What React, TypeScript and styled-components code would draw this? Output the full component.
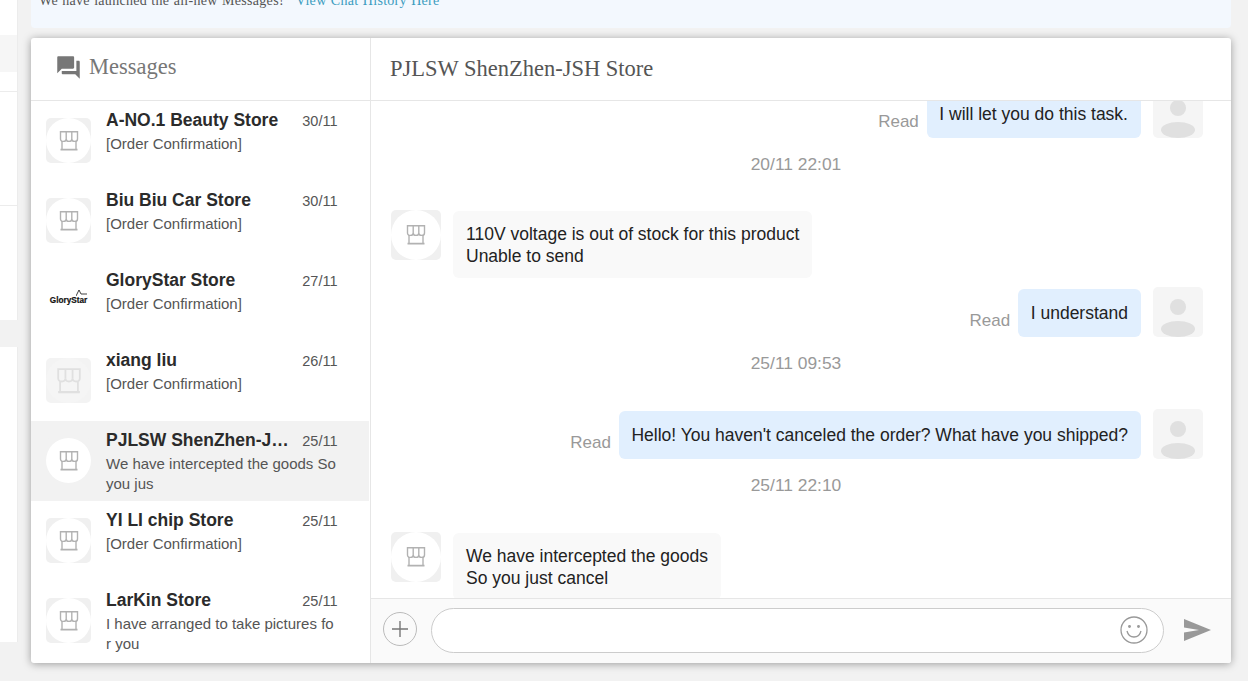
import React from 'react'
import styled, { createGlobalStyle } from 'styled-components'

const sans = '"Liberation Sans", Arial, sans-serif'
const serif = '"Liberation Serif", "Times New Roman", serif'

const GlobalStyle = createGlobalStyle`
  html, body {
    margin: 0;
    padding: 0;
    height: 100%;
    overflow: hidden;
    background: #f2f2f2;
    font-family: ${sans};
  }
  * { box-sizing: border-box; }
`

const Page = styled.div`
  display: flex;
  gap: 13px;
  height: 701px;
  margin-top: -20px;
  overflow: hidden;
`

const Rail = styled.aside`
  display: flex;
  flex-direction: column;
  flex: 0 0 18px;
`

const RailBlock = styled.div<{ $h: number; $kind: 'white' | 'band' | 'gap'; $line?: boolean }>`
  height: ${(p) => p.$h}px;
  background: ${(p) => (p.$kind === 'white' ? '#fff' : p.$kind === 'band' ? '#f6f6f6' : 'transparent')};
  border-right: ${(p) => (p.$kind === 'gap' ? 'none' : '1px solid #ececec')};
  border-bottom: ${(p) => (p.$line ? '1px solid #ececec' : 'none')};
`

const Main = styled.main`
  display: flex;
  flex-direction: column;
  flex: 0 0 1200px;
`

const Notice = styled.div`
  height: 48px;
  padding: 11px 8px 0;
  background: #f3f8fe;
  border-radius: 0 0 4px 4px;
  font-family: ${serif};
  font-size: 14px;
  line-height: 20px;
  color: #555;
  letter-spacing: 0.3px;
  word-spacing: 0.5px;
`

const NoticeLink = styled.a`
  margin-left: 12px;
  color: #3b9cc0;
`

const Card = styled.section`
  display: flex;
  height: 625px;
  margin-top: 10px;
  background: #fff;
  border-radius: 3px;
  box-shadow: 0 1px 8px rgba(0, 0, 0, 0.36);
  overflow: hidden;
`

const Sidebar = styled.div`
  display: flex;
  flex-direction: column;
  flex: 0 0 340px;
  border-right: 1px solid #e6e6e6;
`

const SidebarHead = styled.header`
  display: flex;
  align-items: center;
  gap: 7px;
  height: 63px;
  padding: 0 0 4px 24px;
  border-bottom: 1px solid #e6e6e6;
  font-family: ${serif};
  font-size: 22.5px;
  color: #777;
`

const List = styled.div`
  flex: 1;
  overflow: hidden;
`

const Item = styled.div<{ $active?: boolean }>`
  display: flex;
  gap: 15px;
  height: 80px;
  width: 338px;
  padding: 8px 0 0 15px;
  background: ${(p) => (p.$active ? '#f2f2f2' : 'transparent')};
`

const Thumb = styled.div<{ $active?: boolean; $faded?: boolean; $plain?: boolean }>`
  display: flex;
  align-items: center;
  justify-content: center;
  flex: 0 0 45px;
  width: 45px;
  height: 45px;
  margin-top: 9px;
  border-radius: 5px;
  background: ${(p) => (p.$plain ? 'transparent' : p.$active ? '#f2f2f2' : p.$faded ? '#f3f3f3' : '#f0f0f0')};
  overflow: hidden;
`

const ThumbCircle = styled.div<{ $faded?: boolean }>`
  display: flex;
  align-items: center;
  justify-content: center;
  width: 45px;
  height: 45px;
  border-radius: 50%;
  background: ${(p) => (p.$faded ? '#f5f5f5' : '#fff')};
`

const ItemBody = styled.div`
  flex: 1;
  min-width: 0;
  padding-right: 31.5px;
`

const ItemTop = styled.div`
  display: flex;
  align-items: flex-start;
  gap: 12px;
  height: 24px;
`

const ItemName = styled.div`
  flex: 1;
  min-width: 0;
  white-space: nowrap;
  overflow: hidden;
  text-overflow: ellipsis;
  font-size: 17.5px;
  font-weight: 700;
  line-height: 22px;
  color: #2b2b2b;
`

const ItemDate = styled.div`
  flex: none;
  margin-top: 4px;
  font-size: 14.5px;
  line-height: 17px;
  color: #555;
`

const ItemText = styled.div`
  margin-top: 1px;
  font-size: 15px;
  line-height: 20px;
  color: #555;
  word-break: break-all;
`

const LogoMark = styled.div`
  position: relative;
  font-size: 8.2px;
  font-weight: 700;
  line-height: 9px;
  color: #111;
  white-space: nowrap;
  -webkit-text-stroke: 0.2px #111;
`

const LogoTick = styled.svg`
  position: absolute;
  top: -7px;
  right: -1px;
`

const Chat = styled.div`
  display: flex;
  flex-direction: column;
  flex: 1;
  min-width: 0;
`

const ChatHead = styled.header`
  display: flex;
  align-items: center;
  height: 63px;
  padding: 0 0 1px 19px;
  border-bottom: 1px solid #e6e6e6;
  font-family: ${serif};
  font-size: 22.5px;
  color: #555;
`

const Thread = styled.div`
  flex: 1;
  min-height: 0;
  padding: 0 28px 0 20px;
  overflow: hidden;
`

const ThreadInner = styled.div`
  margin-top: -13px;
`

const Row = styled.div<{ $own?: boolean }>`
  display: flex;
  align-items: flex-start;
  justify-content: ${(p) => (p.$own ? 'flex-end' : 'flex-start')};
  gap: 12px;
  margin-bottom: ${(p) => (p.$own ? 0 : 9)}px;
`

const Bubble = styled.div<{ $own?: boolean }>`
  padding: ${(p) => (p.$own ? '13px 13px 13px 12.5px' : '12px 13px 11px')};
  margin-top: ${(p) => (p.$own ? 2 : 1)}px;
  border-radius: 6px;
  background: ${(p) => (p.$own ? '#e1effe' : '#f9f9f9')};
  font-size: 17.5px;
  line-height: 22px;
  color: #222;
`

const ReadMark = styled.span`
  align-self: flex-end;
  margin: 0 -4px 6px 0;
  font-size: 17px;
  line-height: 20px;
  color: #999;
`

const TimeStamp = styled.div<{ $after?: number }>`
  margin: 16px 0 ${(p) => p.$after ?? 36}px;
  padding-right: 2px;
  font-size: 17.4px;
  line-height: 20px;
  text-align: center;
  color: #999;
`

const UserAvatar = styled.svg`
  flex: 0 0 50px;
`

const StoreAvatar = styled.div`
  display: flex;
  align-items: center;
  justify-content: center;
  flex: 0 0 50px;
  height: 50px;
  border-radius: 5px;
  background: #f0f0f0;
  overflow: hidden;
`

const StoreCircle = styled.div`
  display: flex;
  align-items: center;
  justify-content: center;
  width: 50px;
  height: 50px;
  border-radius: 50%;
  background: #fff;
`

const Composer = styled.footer`
  display: flex;
  align-items: center;
  flex: 0 0 65px;
  padding: 0 20px 2px 12px;
  background: #fafafa;
  border-top: 1px solid #e6e6e6;
`

const RoundButton = styled.button`
  display: flex;
  align-items: center;
  justify-content: center;
  flex: 0 0 34px;
  height: 34px;
  padding: 0;
  margin-top: -2px;
  border: 1px solid #bbb;
  border-radius: 50%;
  background: #fafafa;
`

const InputWrap = styled.div`
  display: flex;
  align-items: center;
  justify-content: flex-end;
  flex: 0 0 733px;
  height: 45px;
  margin-left: 14px;
  padding-right: 15px;
  border: 1px solid #ccc;
  border-radius: 23px;
  background: #fff;
`

const SendButton = styled.svg`
  margin-left: 20px;
`

const StoreIcon = ({ size = 22, color = '#b2b2b2' }: { size?: number; color?: string }) => (
  <svg width={size} height={size} viewBox="0 0 22 22" fill="none" stroke={color} strokeWidth="1.4">
    <path d="M2.5 1.7h17v7.2c0 1.5-1 2.5-2.8 2.5s-2.9-1-2.9-2.5c0 1.5-1.1 2.5-2.8 2.5s-2.8-1-2.8-2.5c0 1.5-1.1 2.5-2.9 2.5s-2.8-1-2.8-2.5z" />
    <path d="M8.2 1.7v7.2M13.8 1.7v7.2M4 11v8M18 11v8" />
    <path d="M2.5 19.7h17" strokeWidth="1.8" />
  </svg>
)

const DefaultUser = () => (
  <UserAvatar width="50" height="50" viewBox="0 0 50 50">
    <rect width="50" height="50" rx="5" fill="#f5f5f5" />
    <circle cx="25" cy="20" r="8" fill="#e0e0e0" />
    <ellipse cx="25" cy="42" rx="17" ry="8" fill="#e0e0e0" />
  </UserAvatar>
)

const StoreFace = () => (
  <StoreAvatar>
    <StoreCircle>
      <StoreIcon />
    </StoreCircle>
  </StoreAvatar>
)

type Conversation = {
  name: string
  date: string
  text: string
  active?: boolean
  faded?: boolean
  logo?: boolean
}

const conversations: Conversation[] = [
  { name: 'A-NO.1 Beauty Store', date: '30/11', text: '[Order Confirmation]' },
  { name: 'Biu Biu Car Store', date: '30/11', text: '[Order Confirmation]' },
  { name: 'GloryStar Store', date: '27/11', text: '[Order Confirmation]', logo: true },
  { name: 'xiang liu', date: '26/11', text: '[Order Confirmation]', faded: true },
  { name: 'PJLSW ShenZhen-JSH Store', date: '25/11', text: 'We have intercepted the goods So you jus', active: true },
  { name: 'YI LI chip Store', date: '25/11', text: '[Order Confirmation]' },
  { name: 'LarKin Store', date: '25/11', text: 'I have arranged to take pictures for you' },
]

const App = () => {
  return (
    <>
      <GlobalStyle />
      <Page>
        <Rail>
          <RailBlock $h={55} $kind="white" />
          <RailBlock $h={37} $kind="band" />
          <RailBlock $h={20} $kind="white" $line />
          <RailBlock $h={114} $kind="white" $line />
          <RailBlock $h={114} $kind="white" />
          <RailBlock $h={27} $kind="gap" />
          <RailBlock $h={295} $kind="white" />
        </Rail>
        <Main>
          <Notice>
            We have launched the all-new Messages!
            <NoticeLink>View Chat History Here</NoticeLink>
          </Notice>
          <Card>
            <Sidebar>
              <SidebarHead>
                <svg width="27" height="27" viewBox="0 0 24 24" fill="#777">
                  <path d="M21 6h-2v9H6v2c0 .55.45 1 1 1h11l4 4V7c0-.55-.45-1-1-1zm-4 6V3c0-.55-.45-1-1-1H3c-.55 0-1 .45-1 1v14l4-4h10c.55 0 1-.45 1-1z" />
                </svg>
                Messages
              </SidebarHead>
              <List>
                {conversations.map((c) => (
                  <Item key={c.name} $active={c.active}>
                    <Thumb $active={c.active} $faded={c.faded} $plain={c.logo}>
                      {c.logo ? (
                        <LogoMark>
                          GloryStar
                          <LogoTick width="12" height="8" viewBox="0 0 12 8" fill="none" stroke="#111" strokeWidth="0.8">
                            <path d="M0 7L3 1l2 4h6" />
                          </LogoTick>
                        </LogoMark>
                      ) : (
                        <ThumbCircle $faded={c.faded}>
                          {c.faded ? <StoreIcon size={28} color="#e0e0e0" /> : <StoreIcon />}
                        </ThumbCircle>
                      )}
                    </Thumb>
                    <ItemBody>
                      <ItemTop>
                        <ItemName>{c.name}</ItemName>
                        <ItemDate>{c.date}</ItemDate>
                      </ItemTop>
                      <ItemText>{c.text}</ItemText>
                    </ItemBody>
                  </Item>
                ))}
              </List>
            </Sidebar>
            <Chat>
              <ChatHead>PJLSW ShenZhen-JSH Store</ChatHead>
              <Thread>
                <ThreadInner>
                  <Row $own>
                    <ReadMark>Read</ReadMark>
                    <Bubble $own>I will let you do this task.</Bubble>
                    <DefaultUser />
                  </Row>
                  <TimeStamp>20/11 22:01</TimeStamp>
                  <Row>
                    <StoreFace />
                    <Bubble>
                      110V voltage is out of stock for this product
                      <br />
                      Unable to send
                    </Bubble>
                  </Row>
                  <Row $own>
                    <ReadMark>Read</ReadMark>
                    <Bubble $own>I understand</Bubble>
                    <DefaultUser />
                  </Row>
                  <TimeStamp>25/11 09:53</TimeStamp>
                  <Row $own>
                    <ReadMark>Read</ReadMark>
                    <Bubble $own>Hello! You haven't canceled the order? What have you shipped?</Bubble>
                    <DefaultUser />
                  </Row>
                  <TimeStamp $after={37}>25/11 22:10</TimeStamp>
                  <Row>
                    <StoreFace />
                    <Bubble>
                      We have intercepted the goods
                      <br />
                      So you just cancel
                    </Bubble>
                  </Row>
                </ThreadInner>
              </Thread>
              <Composer>
                <RoundButton>
                  <svg width="20" height="20" viewBox="0 0 20 20" stroke="#777" strokeWidth="1.4">
                    <path d="M10 2v16M2 10h16" />
                  </svg>
                </RoundButton>
                <InputWrap>
                  <svg width="28" height="28" viewBox="0 0 28 28" fill="none" stroke="#999" strokeWidth="1.3">
                    <circle cx="14" cy="14" r="13" />
                    <path d="M7 15c1 4 4 6 7 6s6-2 7-6" />
                    <circle cx="9.5" cy="10.5" r="0.8" fill="#999" />
                    <circle cx="18.5" cy="10.5" r="0.8" fill="#999" />
                  </svg>
                </InputWrap>
                <SendButton width="27" height="22" viewBox="0 0 27 22" fill="#999">
                  <path d="M0 0l27 11L0 22v-8.5L15 11 0 8.5z" />
                </SendButton>
              </Composer>
            </Chat>
          </Card>
        </Main>
      </Page>
    </>
  )
}

export default App
